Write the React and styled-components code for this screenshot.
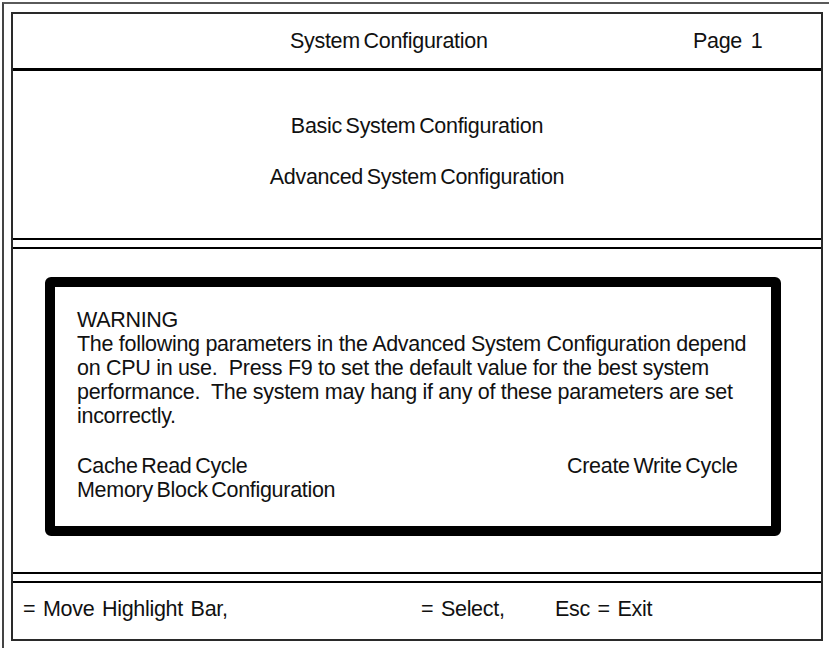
import React from "react";
import styled, { createGlobalStyle } from "styled-components";

const GlobalStyle = createGlobalStyle`
  html, body { margin: 0; padding: 0; background: #fff; }
  body {
    font-family: "Liberation Sans", Arial, sans-serif;
    color: #111;
  }
`;

const Page = styled.div`
  padding: 2px 0 0 2px;
  width: 829px;
  height: 648px;
  box-sizing: border-box;
  overflow: hidden;
`;

const OuterFrame = styled.div`
  border-top: 2px solid #5a5a5a;
  border-left: 2px solid #444;
  padding: 8px 0 0 7px;
  height: 700px;
  box-sizing: border-box;
`;

const Frame = styled.div`
  width: 812px;
  height: 629px;
  box-sizing: border-box;
  border: 2px solid #2a2a2a;
  display: flex;
  flex-direction: column;
  font-size: 21.5px;
  line-height: 24px;
  letter-spacing: -0.3px;
`;

const Header = styled.div`
  height: 57px;
  box-sizing: border-box;
  border-bottom: 3px solid #000;
  display: grid;
  grid-template-columns: 277px 403px 1fr;
  align-items: center;
`;

const Title = styled.div`
  grid-column: 2;
  word-spacing: -2px;
`;

const PageNo = styled.div`
  grid-column: 3;
  word-spacing: 3px;
`;

const Menu = styled.div`
  height: 167px;
  box-sizing: border-box;
  padding-top: 43px;
  display: flex;
  flex-direction: column;
  align-items: center;
  gap: 27px;
  word-spacing: -2px;
`;

const DoubleRule = styled.div`
  height: 11px;
  box-sizing: border-box;
  border-top: 2px solid #000;
  border-bottom: 2px solid #000;
`;

const WarningArea = styled.div`
  height: 323px;
  box-sizing: border-box;
  padding: 28px 0 0 32px;
`;

const WarningBox = styled.div`
  width: 736px;
  height: 259px;
  box-sizing: border-box;
  border: 10px solid #000;
  border-radius: 6px;
  padding: 21px 10px 0 22px;
`;

const Para = styled.p`
  margin: 0;
`;

const Params = styled.div`
  margin-top: 26px;
  display: grid;
  grid-template-columns: 490px auto;
  word-spacing: -2px;
`;

const Footer = styled.div`
  flex: 1;
  display: grid;
  grid-template-columns: 398px 134px auto;
  align-items: center;
  padding-left: 10px;
  padding-bottom: 4px;
  word-spacing: 2px;
`;

export default function App() {
  return (
    <>
      <GlobalStyle />
      <Page>
        <OuterFrame>
          <Frame>
            <Header>
              <Title>System Configuration</Title>
              <PageNo>Page 1</PageNo>
            </Header>
            <Menu>
              <div>Basic System Configuration</div>
              <div>Advanced System Configuration</div>
            </Menu>
            <DoubleRule />
            <WarningArea>
              <WarningBox>
                <Para>WARNING</Para>
                <Para>
                  The following parameters in the Advanced System Configuration depend
                  on CPU in use.&nbsp; Press F9 to set the default value for the best system
                  performance.&nbsp; The system may hang if any of these parameters are set
                  incorrectly.
                </Para>
                <Params>
                  <div>Cache Read Cycle</div>
                  <div>Create Write Cycle</div>
                  <div>Memory Block Configuration</div>
                </Params>
              </WarningBox>
            </WarningArea>
            <DoubleRule />
            <Footer>
              <div>= Move Highlight Bar,</div>
              <div>= Select,</div>
              <div>Esc = Exit</div>
            </Footer>
          </Frame>
        </OuterFrame>
      </Page>
    </>
  );
}
